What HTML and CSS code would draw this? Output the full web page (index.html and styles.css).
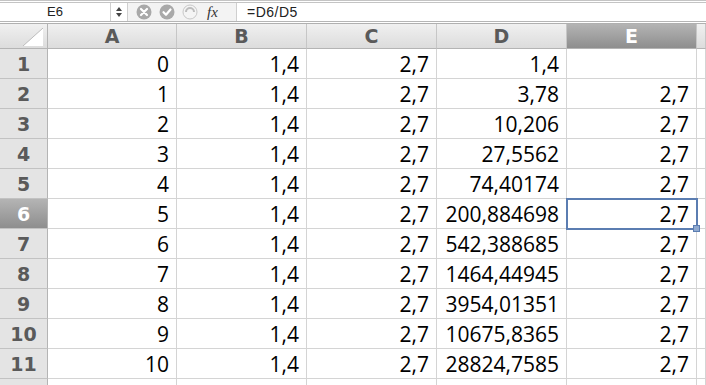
FILE: index.html
```html
<!DOCTYPE html>
<html lang="en">
<head>
  <meta charset="UTF-8">
  <title>Sheet</title>
  <link rel="stylesheet" href="styles.css">
</head>
<body>

<div class="formula-bar">
  <div class="namebox">E6</div>
  <div class="spin">
    <svg width="8" height="12" viewBox="0 0 8 12"><path d="M4 1 L7 5 L1 5 Z M4 11 L7 7 L1 7 Z" fill="#444"/></svg>
  </div>
  <div class="buttons">
    <svg width="16" height="16" viewBox="0 0 16 16"><circle cx="8" cy="8" r="7.5" fill="#a9a9a9"/><path d="M5 5 L11 11 M11 5 L5 11" stroke="#fff" stroke-width="2.2" stroke-linecap="round"/></svg>
    <svg width="16" height="16" viewBox="0 0 16 16"><circle cx="8" cy="8" r="7.5" fill="#a9a9a9"/><path d="M4.5 8.2 L7 10.8 L11.5 5.5" stroke="#fff" stroke-width="2.2" fill="none" stroke-linecap="round" stroke-linejoin="round"/></svg>
    <svg width="16" height="16" viewBox="0 0 16 16"><circle cx="8" cy="8" r="7" fill="#f4f4f4" stroke="#c8c8c8"/><path d="M4 8 A4 4 0 0 1 12 8" stroke="#bdbdbd" stroke-width="2" fill="none"/></svg>
    <span class="fx">fx</span>
  </div>
  <div class="formula">=D6/D5</div>
</div>

<div class="sheet">
  <div class="corner"><svg width="20" height="18" viewBox="0 0 20 18"><path d="M0 18 L20 18 L20 0 Z" fill="#fff"/><path d="M0 18 L20 0" stroke="#bcbcbc"/></svg></div>
  <div class="colhead">A</div>
  <div class="colhead">B</div>
  <div class="colhead">C</div>
  <div class="colhead">D</div>
  <div class="colhead active">E</div>
  <div class="colhead"></div>

  <div class="rowhead">1</div><div class="cell">0</div><div class="cell">1,4</div><div class="cell">2,7</div><div class="cell">1,4</div><div class="cell"></div><div class="cell"></div>
  <div class="rowhead">2</div><div class="cell">1</div><div class="cell">1,4</div><div class="cell">2,7</div><div class="cell">3,78</div><div class="cell">2,7</div><div class="cell"></div>
  <div class="rowhead">3</div><div class="cell">2</div><div class="cell">1,4</div><div class="cell">2,7</div><div class="cell">10,206</div><div class="cell">2,7</div><div class="cell"></div>
  <div class="rowhead">4</div><div class="cell">3</div><div class="cell">1,4</div><div class="cell">2,7</div><div class="cell">27,5562</div><div class="cell">2,7</div><div class="cell"></div>
  <div class="rowhead">5</div><div class="cell">4</div><div class="cell">1,4</div><div class="cell">2,7</div><div class="cell">74,40174</div><div class="cell">2,7</div><div class="cell"></div>
  <div class="rowhead active">6</div><div class="cell">5</div><div class="cell">1,4</div><div class="cell">2,7</div><div class="cell">200,884698</div><div class="cell sel">2,7</div><div class="cell"></div>
  <div class="rowhead">7</div><div class="cell">6</div><div class="cell">1,4</div><div class="cell">2,7</div><div class="cell">542,388685</div><div class="cell">2,7</div><div class="cell"></div>
  <div class="rowhead">8</div><div class="cell">7</div><div class="cell">1,4</div><div class="cell">2,7</div><div class="cell">1464,44945</div><div class="cell">2,7</div><div class="cell"></div>
  <div class="rowhead">9</div><div class="cell">8</div><div class="cell">1,4</div><div class="cell">2,7</div><div class="cell">3954,01351</div><div class="cell">2,7</div><div class="cell"></div>
  <div class="rowhead">10</div><div class="cell">9</div><div class="cell">1,4</div><div class="cell">2,7</div><div class="cell">10675,8365</div><div class="cell">2,7</div><div class="cell"></div>
  <div class="rowhead">11</div><div class="cell">10</div><div class="cell">1,4</div><div class="cell">2,7</div><div class="cell">28824,7585</div><div class="cell">2,7</div><div class="cell"></div>
  <div class="rowhead"></div><div class="cell"></div><div class="cell"></div><div class="cell"></div><div class="cell"></div><div class="cell"></div><div class="cell"></div>
</div>

</body>
</html>
```

FILE: styles.css
```css
body {
  margin: 0;
  width: 706px;
  height: 385px;
  overflow: hidden;
  background: #fff;
  font-family: "Open Sans", Arial, sans-serif;
}

/* formula bar */
.formula-bar {
  display: flex;
  height: 18px;
  border-top: 3px double #c4c4c4;
  border-bottom: 1px solid #b5b5b5;
  font-family: "Liberation Sans", Arial, sans-serif;
  font-size: 13px;
  color: #222;
}
.namebox {
  width: 110px;
  text-align: center;
  line-height: 18px;
  border-right: 1px solid #cfcfcf;
}
.spin {
  width: 16px;
  display: flex;
  align-items: center;
  justify-content: center;
  border-right: 1px solid #cfcfcf;
}
.buttons {
  width: 100px;
  display: flex;
  align-items: center;
  gap: 7px;
  padding-left: 8px;
  background: #f3f3f3;
  border-right: 1px solid #cfcfcf;
}
.fx {
  font-family: "Liberation Serif", serif;
  font-style: italic;
  font-size: 15px;
  color: #333;
  margin-left: 2px;
}
.formula {
  flex: 1;
  padding-left: 10px;
  line-height: 18px;
  font-size: 14px;
  letter-spacing: 0.5px;
}

/* sheet grid */
.sheet {
  margin-top: 1px;
  border-top: 1px solid #b0b0b0;
  display: grid;
  grid-template-columns: 48px 129px 130px 130px 130px 130px 1fr;
  grid-template-rows: 25px repeat(12, 30px);
}
.corner, .colhead, .rowhead {
  background: linear-gradient(#f0f0f0, #dcdcdc);
  border-right: 1px solid #b4b4b4;
  border-bottom: 1px solid #b4b4b4;
  font-family: "DejaVu Sans", sans-serif;
  font-weight: bold;
  font-size: 19px;
  color: #5a5a5a;
  display: flex;
  align-items: center;
  justify-content: center;
}
.corner {
  justify-content: flex-end;
  align-items: flex-end;
  padding: 0 4px 2px 0;
}
.colhead {
  border-right-color: #c6c6c6;
}
.rowhead {
  background: #e4e4e4;
  border-bottom-color: #c2c2c2;
}
.colhead.active, .rowhead.active {
  background: linear-gradient(#b4b4b4, #8e8e8e);
  color: #fff;
}
.cell {
  border-right: 1px solid #d4d4d4;
  border-bottom: 1px solid #d4d4d4;
  text-align: right;
  padding-right: 7px;
  font-size: 21px;
  line-height: 30px;
  color: #000;
}
.sel {
  position: relative;
  outline: 2px solid #5b7db1;
  outline-offset: -1px;
}
.sel::after {
  content: "";
  position: absolute;
  right: -4px;
  bottom: -4px;
  width: 5px;
  height: 5px;
  background: #8fa9cf;
  border: 1px solid #5b7db1;
}
```
